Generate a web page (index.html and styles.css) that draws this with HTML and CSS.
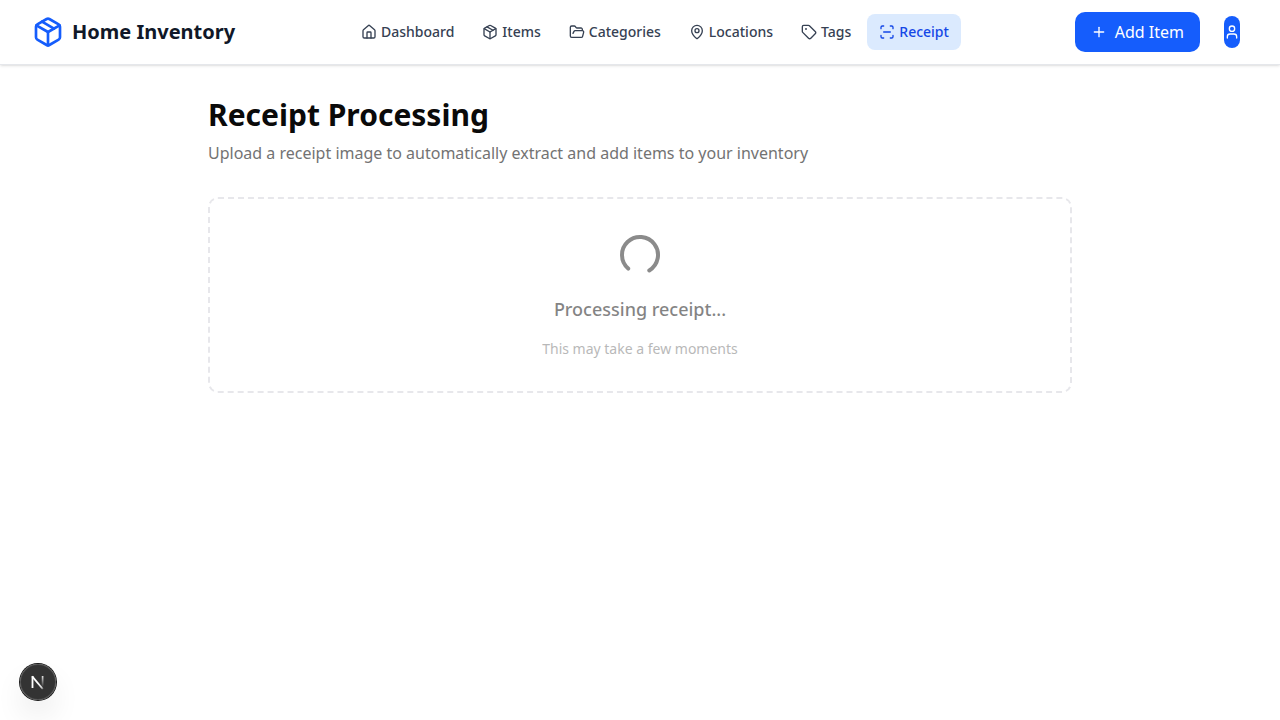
FILE: index.html
```html
<!DOCTYPE html>
<html lang="en">
<head>
<meta charset="utf-8">
<title>Home Inventory</title>
<link rel="stylesheet" href="styles.css">
</head>
<body>
<header class="navbar">
  <a class="brand">
    <svg class="icon brand-icon" viewBox="0 0 24 24"><path d="M11 21.73a2 2 0 0 0 2 0l7-4A2 2 0 0 0 21 16V8a2 2 0 0 0-1-1.73l-7-4a2 2 0 0 0-2 0l-7 4A2 2 0 0 0 3 8v8a2 2 0 0 0 1 1.73z"/><path d="M12 22V12"/><path d="M3.29 7 12 12l8.71-5"/><path d="m7.5 4.27 9 5.15"/></svg>
    <span>Home Inventory</span>
  </a>
  <nav class="links">
    <a class="link"><svg class="icon" viewBox="0 0 24 24"><path d="M15 21v-8a1 1 0 0 0-1-1h-4a1 1 0 0 0-1 1v8"/><path d="M3 10a2 2 0 0 1 .709-1.528l7-6a2 2 0 0 1 2.582 0l7 6A2 2 0 0 1 21 10v9a2 2 0 0 1-2 2H5a2 2 0 0 1-2-2z"/></svg><span>Dashboard</span></a>
    <a class="link"><svg class="icon" viewBox="0 0 24 24"><path d="M11 21.73a2 2 0 0 0 2 0l7-4A2 2 0 0 0 21 16V8a2 2 0 0 0-1-1.73l-7-4a2 2 0 0 0-2 0l-7 4A2 2 0 0 0 3 8v8a2 2 0 0 0 1 1.73z"/><path d="M12 22V12"/><path d="M3.29 7 12 12l8.71-5"/><path d="m7.5 4.27 9 5.15"/></svg><span>Items</span></a>
    <a class="link"><svg class="icon" viewBox="0 0 24 24"><path d="m6 14 1.5-2.9A2 2 0 0 1 9.24 10H20a2 2 0 0 1 1.94 2.5l-1.54 6a2 2 0 0 1-1.95 1.5H4a2 2 0 0 1-2-2V5a2 2 0 0 1 2-2h3.9a2 2 0 0 1 1.69.9l.81 1.2a2 2 0 0 0 1.67.9H18a2 2 0 0 1 2 2v2"/></svg><span>Categories</span></a>
    <a class="link"><svg class="icon" viewBox="0 0 24 24"><path d="M20 10c0 4.993-5.539 10.193-7.399 11.799a1 1 0 0 1-1.202 0C9.539 20.193 4 14.993 4 10a8 8 0 0 1 16 0"/><circle cx="12" cy="10" r="3"/></svg><span>Locations</span></a>
    <a class="link"><svg class="icon" viewBox="0 0 24 24"><path d="M12.586 2.586A2 2 0 0 0 11.172 2H4a2 2 0 0 0-2 2v7.172a2 2 0 0 0 .586 1.414l8.704 8.704a2.426 2.426 0 0 0 3.42 0l6.58-6.58a2.426 2.426 0 0 0 0-3.42z"/><circle cx="7.5" cy="7.5" r=".5" fill="currentColor"/></svg><span>Tags</span></a>
    <a class="link active"><svg class="icon" viewBox="0 0 24 24"><path d="M3 7V5a2 2 0 0 1 2-2h2"/><path d="M17 3h2a2 2 0 0 1 2 2v2"/><path d="M21 17v2a2 2 0 0 1-2 2h-2"/><path d="M7 21H5a2 2 0 0 1-2-2v-2"/><path d="M7 12h10"/></svg><span>Receipt</span></a>
  </nav>
  <div class="actions">
    <button class="add"><svg class="icon" viewBox="0 0 24 24"><path d="M5 12h14"/><path d="M12 5v14"/></svg><span>Add Item</span></button>
    <button class="avatar" aria-label="Account"><svg class="icon" viewBox="0 0 24 24"><path d="M19 21v-2a4 4 0 0 0-4-4H9a4 4 0 0 0-4 4v2"/><circle cx="12" cy="7" r="4"/></svg></button>
  </div>
</header>
<main class="page">
  <h1 class="title">Receipt Processing</h1>
  <p class="subtitle">Upload a receipt image to automatically extract and add items to your inventory</p>
  <section class="dropzone">
    <div class="progress">
      <svg class="icon spinner" viewBox="0 0 24 24"><path d="M21 12a9 9 0 1 1-6.219-8.56"/></svg>
      <p class="status">Processing receipt...</p>
      <p class="hint">This may take a few moments</p>
    </div>
  </section>
</main>
<div class="dev-badge">
  <svg class="dev-logo" viewBox="0 0 36 36" fill="none">
    <defs>
      <linearGradient id="fade-diagonal" x1="18" y1="19" x2="24" y2="26" gradientUnits="userSpaceOnUse"><stop stop-color="#fff"/><stop offset=".6" stop-color="#fff" stop-opacity=".8"/><stop offset="1" stop-color="#fff" stop-opacity="0"/></linearGradient>
      <linearGradient id="fade-stem" x1="23" y1="12" x2="23" y2="23" gradientUnits="userSpaceOnUse"><stop stop-color="#fff" stop-opacity=".85"/><stop offset="1" stop-color="#fff" stop-opacity="0"/></linearGradient>
    </defs>
    <path d="M12.2 12.3L22.8 25" stroke="url(#fade-diagonal)" stroke-width="1.8"/>
    <path d="M12.5 24V12" stroke="#fff" stroke-width="1.8"/>
    <path d="M22.6 12v12" stroke="url(#fade-stem)" stroke-width="1.7"/>
  </svg>
</div>
</body>
</html>
```
FILE: styles.css
```css
* { box-sizing: border-box; margin: 0; padding: 0; }

body {
  background: #fff;
  color: #0a0a0a;
  font-family: "Noto Sans", sans-serif;
  font-size: 16px;
  line-height: 24px;
  min-height: 100vh;
  overflow: hidden;
}

.icon {
  display: block;
  flex: none;
  width: 16px;
  height: 16px;
  fill: none;
  stroke: currentColor;
  stroke-width: 2;
  stroke-linecap: round;
  stroke-linejoin: round;
}

.navbar {
  display: flex;
  align-items: center;
  justify-content: space-between;
  height: 65px;
  padding: 0 32px;
  background: #fff;
  border-bottom: 1px solid #e5e7eb;
  box-shadow: 0 1px 3px rgba(0, 0, 0, .1), 0 1px 2px -1px rgba(0, 0, 0, .1);
}

.brand {
  display: flex;
  align-items: center;
  gap: 8px;
  color: #101828;
  font-size: 20px;
  font-weight: 700;
  line-height: 28px;
}

.brand-icon { width: 32px; height: 32px; color: #155dfc; }

.links { display: flex; gap: 4px; }

.link {
  display: flex;
  align-items: center;
  gap: 4px;
  padding: 8px 12px;
  border-radius: 8px;
  color: #364153;
  font-size: 14px;
  font-weight: 500;
  line-height: 20px;
}

.link.active { background: #dbeafe; color: #1447e6; }

.actions {
  display: flex;
  align-items: center;
  gap: 24px;
  padding-right: 8px;
}

.add {
  display: flex;
  align-items: center;
  gap: 8px;
  padding: 8px 16px;
  border: 0;
  border-radius: 10px;
  background: #155dfc;
  color: #fff;
  font: inherit;
}

.avatar {
  display: flex;
  align-items: center;
  width: 16px;
  height: 32px;
  border: 0;
  border-radius: 8px;
  background: #155dfc;
  color: #fff;
}

.page { width: 864px; margin: 0 auto; padding-top: 32px; }
.title { font-size: 30px; font-weight: 700; line-height: 36px; }
.subtitle { margin-top: 8px; color: #737373; }

.dropzone {
  margin-top: 32px;
  padding: 32px;
  border: 2px dashed #e7e7eb;
  border-radius: 10px;
}

.progress {
  display: flex;
  flex-direction: column;
  align-items: center;
  gap: 16px;
  opacity: .5;
}

.spinner { width: 48px; height: 48px; color: #1a1a1a; transform: rotate(131deg); }
.status { font-size: 18px; font-weight: 500; line-height: 28px; }
.hint { color: #737373; font-size: 14px; line-height: 20px; }

.dev-badge {
  position: fixed;
  left: 20px;
  bottom: 20px;
  width: 36px;
  height: 36px;
  border-radius: 50%;
  background: rgba(0, 0, 0, .8);
  box-shadow: 0 0 0 1px #171717, inset 0 0 0 1px rgba(255, 255, 255, .14), 0 16px 32px -8px rgba(0, 0, 0, .24);
}

.dev-logo { display: block; width: 36px; height: 36px; }
```
